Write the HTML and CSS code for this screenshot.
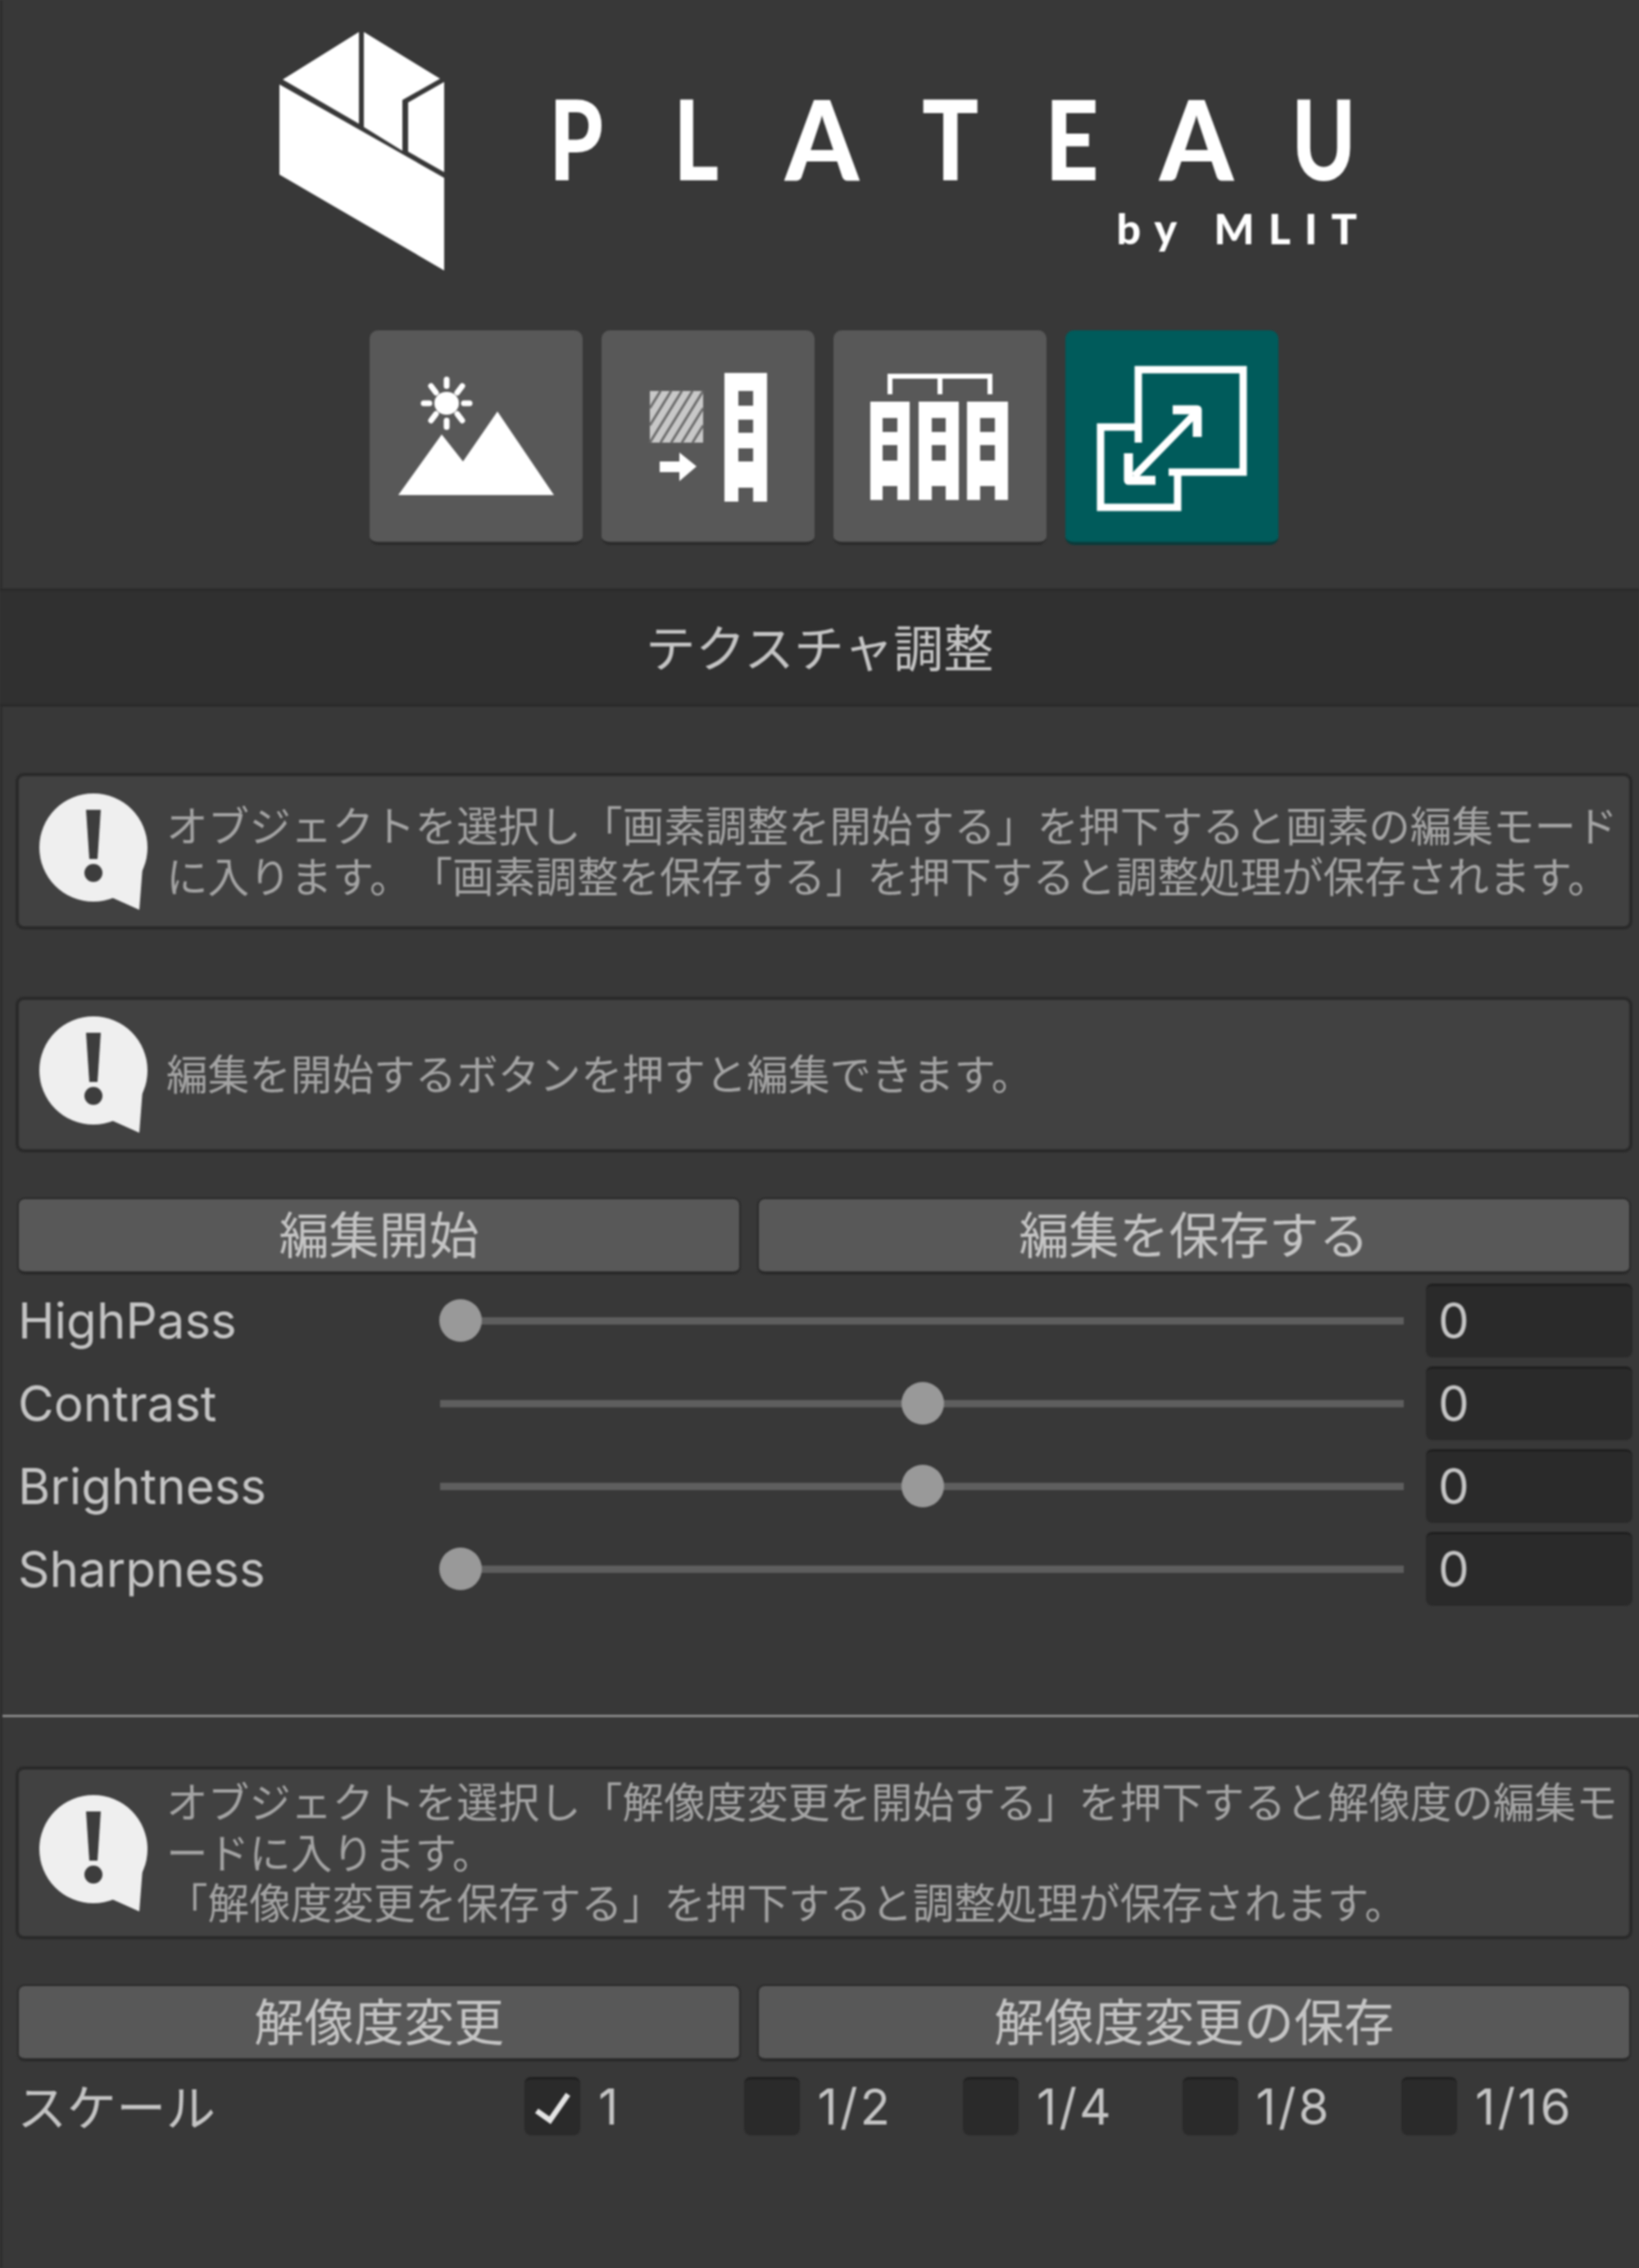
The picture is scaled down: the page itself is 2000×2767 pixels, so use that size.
FILE: index.html
```html
<!DOCTYPE html>
<html lang="ja">
<head>
<meta charset="utf-8">
<title>PLATEAU テクスチャ調整</title>
<link rel="stylesheet" href="styles.css">
</head>
<body>
<svg class="defs" width="0" height="0" aria-hidden="true">
  <symbol id="help" viewBox="0 0 132 142">
    <ellipse cx="66" cy="66" rx="66" ry="66" fill="#efefef"/>
    <polygon points="126,90 122,142 84,125" fill="#efefef"/>
    <polygon points="57,20 75,20 71,80 61,80" fill="#3d3d3d"/>
    <circle cx="66" cy="97" r="11" fill="#3d3d3d"/>
  </symbol>
</svg>
<main class="panel">
  <header class="logo">
    <svg class="logo-mark" viewBox="0 0 204 292" aria-hidden="true">
      <g fill="#fff">
        <polygon points="4,59 97,1 97,113"/>
        <polygon points="103,1 196,58 150,84 150,146 103,117"/>
        <polygon points="157,87 201,62 201,172 157,147"/>
        <polygon points="0,65 201,179 201,292 0,175"/>
      </g>
    </svg>
    <div class="wordmark">
      <div class="wordmark-main"><span>P</span><span>L</span><span class="wide">A</span><span class="mid">T</span><span class="mid">E</span><span class="wide">A</span><span>U</span></div>
      <div class="wordmark-sub">by MLIT</div>
    </div>
  </header>

  <nav class="modes">
    <button class="mode">
      <svg viewBox="0 0 260 260" aria-hidden="true">
        <polygon points="35,201 88,127 114,160 156,99 225,201" fill="#fff"/>
        <ellipse cx="94" cy="89" rx="15" ry="14" fill="#fff"/>
        <g stroke="#fff" stroke-width="7" stroke-linecap="round">
          <line x1="94" y1="60" x2="94" y2="68"/><line x1="94" y1="110" x2="94" y2="118"/>
          <line x1="66" y1="89" x2="73" y2="89"/><line x1="115" y1="89" x2="122" y2="89"/>
          <line x1="75" y1="68" x2="81" y2="76"/><line x1="113" y1="68" x2="107" y2="76"/>
          <line x1="75" y1="110" x2="81" y2="102"/><line x1="113" y1="110" x2="107" y2="102"/>
        </g>
      </svg>
    </button>
    <button class="mode">
      <svg viewBox="0 0 260 260" aria-hidden="true">
        <rect x="59" y="74" width="65" height="63" fill="#c8c8c8"/>
        <g stroke="#6a6a6a" stroke-width="3">
          <line x1="59" y1="95" x2="72" y2="74"/><line x1="59" y1="116" x2="85" y2="74"/>
          <line x1="59" y1="137" x2="98" y2="74"/><line x1="72" y1="137" x2="111" y2="74"/>
          <line x1="85" y1="137" x2="124" y2="74"/><line x1="98" y1="137" x2="124" y2="95"/>
          <line x1="111" y1="137" x2="124" y2="116"/>
        </g>
        <polygon points="71,160 95,160 95,149 116,166 95,184 95,173 71,173" fill="#fff"/>
        <path d="M150 52h52v157h-17v-17h-18v17h-17zM167 74v18h18v-18zM167 109v16h18v-16zM167 144v16h18v-16z" fill="#fff" fill-rule="evenodd"/>
      </svg>
    </button>
    <button class="mode">
      <svg viewBox="0 0 260 260" aria-hidden="true">
        <path d="M69 78V56H191V78M130 56V78" fill="none" stroke="#fff" stroke-width="6"/>
        <path d="M45 87h48v120h-15v-17h-18v17h-15zM60 107v17h18v-17zM60 140v19h18v-19z" fill="#fff" fill-rule="evenodd"/>
        <path d="M104 87h49v120h-16v-17h-17v17h-16zM120 107v17h17v-17zM120 140v19h17v-19z" fill="#fff" fill-rule="evenodd"/>
        <path d="M163 87h50v120h-16v-17h-18v17h-16zM179 107v17h18v-17zM179 140v19h18v-19z" fill="#fff" fill-rule="evenodd"/>
      </svg>
    </button>
    <button class="mode mode-active">
      <svg viewBox="0 0 260 260" aria-hidden="true">
        <g fill="none" stroke="#fff" stroke-width="9">
          <path d="M89 137V48H217V173H126"/>
          <path d="M89 118H43V216H137V173"/>
          <path d="M84 178L158 102"/>
        </g>
        <g fill="none" stroke="#fff" stroke-width="11" stroke-linejoin="round">
          <path d="M131 97H161V130"/>
          <path d="M77 150V183H110"/>
        </g>
      </svg>
    </button>
  </nav>

  <h1 class="title">テクスチャ調整</h1>

  <section class="help help-first">
    <svg class="help-icon" aria-hidden="true"><use href="#help"/></svg>
    <p>オブジェクトを選択し「画素調整を開始する」を押下すると画素の編集モード<br>に入ります。「画素調整を保存する」を押下すると調整処理が保存されます。</p>
  </section>

  <section class="help help-second">
    <svg class="help-icon" aria-hidden="true"><use href="#help"/></svg>
    <p>編集を開始するボタンを押すと編集できます。</p>
  </section>

  <div class="actions actions-edit">
    <button class="action action-left">編集開始</button>
    <button class="action action-right">編集を保存する</button>
  </div>

  <div class="sliders">
    <div class="slider-row">
      <label>HighPass</label>
      <div class="track"><span class="thumb thumb-min"></span></div>
      <div class="value">0</div>
    </div>
    <div class="slider-row">
      <label>Contrast</label>
      <div class="track"><span class="thumb thumb-mid"></span></div>
      <div class="value">0</div>
    </div>
    <div class="slider-row">
      <label>Brightness</label>
      <div class="track"><span class="thumb thumb-mid"></span></div>
      <div class="value">0</div>
    </div>
    <div class="slider-row">
      <label>Sharpness</label>
      <div class="track"><span class="thumb thumb-min"></span></div>
      <div class="value">0</div>
    </div>
  </div>

  <hr class="divider">

  <section class="help help-third">
    <svg class="help-icon" aria-hidden="true"><use href="#help"/></svg>
    <p>オブジェクトを選択し「解像度変更を開始する」を押下すると解像度の編集モ<br>ードに入ります。<br>「解像度変更を保存する」を押下すると調整処理が保存されます。</p>
  </section>

  <div class="actions actions-resize">
    <button class="action action-left">解像度変更</button>
    <button class="action action-right">解像度変更の保存</button>
  </div>

  <div class="scale">
    <span class="scale-label">スケール</span>
    <div class="scale-options">
      <div class="option">
        <span class="box"><svg viewBox="0 0 68 71" aria-hidden="true"><polyline points="14,40 31,52 54,19" fill="none" stroke="#e4e4e4" stroke-width="7"/></svg></span>
        <span>1</span>
      </div>
      <div class="option"><span class="box"></span><span>1/2</span></div>
      <div class="option"><span class="box"></span><span>1/4</span></div>
      <div class="option"><span class="box"></span><span>1/8</span></div>
      <div class="option"><span class="box"></span><span>1/16</span></div>
    </div>
  </div>
</main>
</body>
</html>
```
FILE: styles.css
```css
* { box-sizing: border-box; }
html, body { margin: 0; padding: 0; background: #383838; }
body {
  width: 2000px;
  height: 2767px;
  overflow: hidden;
  font-family: "Inter", "Noto Sans CJK JP", sans-serif;
  color: #c4c4c4;
}
.defs { position: absolute; }
.panel {
  display: flex;
  flex-direction: column;
  height: 2767px;
  border-left: 3px solid #2e2e2e;
  filter: blur(.8px);
}

/* logo */
.logo { display: flex; height: 403px; padding: 38px 0 0 338px; }
.logo-mark { width: 204px; height: 292px; flex: none; }
.wordmark { margin-left: 125px; padding-top: 82px; width: 986px; }
.wordmark-main {
  display: grid;
  grid-template-columns: 152px 136px 167px 150px 140px 161px 80px;
  font-family: "Lato", sans-serif;
  font-weight: 900;
  font-size: 135px;
  line-height: 97px;
  color: #fff;
}
.wordmark-main span { display: block; transform: scaleX(.78); transform-origin: left center; }
.wordmark-main .wide { transform: scaleX(.95); }
.wordmark-main .mid { transform: scaleX(.85); }
.wordmark-sub {
  margin: 40px -17px 0 0;
  text-align: right;
  font-family: "Lato", sans-serif;
  font-weight: 900;
  font-size: 52px;
  line-height: 42px;
  letter-spacing: 17px;
  color: #fff;
}

/* mode tabs */
.modes { display: flex; justify-content: center; gap: 23px; margin-left: 8px; }
.mode {
  width: 260px;
  height: 262px;
  padding: 0;
  background: #585858;
  border: 0;
  border-bottom: 4px solid #2c2c2c;
  border-radius: 10px;
}
.mode svg { display: block; width: 260px; height: 260px; }
.mode-active { background: #005b5b; border-bottom-color: #0b3b3b; }

/* title band */
.title {
  margin: 53px 0 0 -3px;
  height: 144px;
  padding-bottom: 6px;
  display: flex;
  align-items: center;
  justify-content: center;
  background: #303030;
  border-top: 3px solid #2a2a2a;
  border-bottom: 3px solid #2a2a2a;
  font-size: 61px;
  font-weight: 400;
  color: #c4c4c4;
}

/* help boxes */
.help {
  display: flex;
  align-items: center;
  margin: 0 8px 0 16px;
  padding-left: 25px;
  background: #414141;
  border: 4px solid #2a2a2a;
  border-radius: 10px;
}
.help-first { margin-top: 81px; height: 191px; }
.help-second { margin-top: 82px; height: 190px; }
.help-third { margin-top: 60px; height: 211px; }
.help-icon { flex: none; width: 132px; height: 142px; }
.help p {
  margin: 2px 0 0 23px;
  font-size: 50.6px;
  line-height: 61.5px;
  white-space: nowrap;
  text-spacing-trim: space-all;
  color: #a4a4a4;
}

/* action buttons */
.actions { display: flex; gap: 20px; margin: 0 10px 0 18px; }
.actions-edit { margin-top: 55px; }
.actions-resize { margin-top: 55px; }
.action {
  height: 94px;
  padding: 2px 0 0;
  background: #585858;
  border: 2px solid #2a2a2a;
  border-bottom-width: 4px;
  border-radius: 9px;
  font: inherit;
  font-size: 61px;
  line-height: 1;
  color: #c4c4c4;
}
.action-left { width: 883px; }
.action-right { flex: 1; }

/* sliders */
.sliders { display: flex; flex-direction: column; gap: 11px; margin: 11px 5px 0 19px; }
.slider-row { display: flex; align-items: center; height: 90px; }
.slider-row label { flex: none; width: 515px; font-size: 60px; }
.track {
  position: relative;
  flex: none;
  width: 1176px;
  height: 9px;
  background: #5e5e5e;
}
.thumb {
  position: absolute;
  top: -22px;
  width: 52px;
  height: 52px;
  border-radius: 50%;
  background: #999;
}
.thumb-min { left: -1px; }
.thumb-mid { left: 563px; }
.value {
  flex: none;
  width: 252px;
  height: 90px;
  margin-left: 27px;
  padding-left: 15px;
  background: #2a2a2a;
  border-top: 3px solid #1f1f1f;
  border-radius: 8px;
  font-size: 60px;
  line-height: 84px;
}

.divider {
  height: 3px;
  margin: 133px 0 0;
  border: 0;
  background: #888;
}

/* scale */
.scale { display: flex; align-items: center; margin: 19px 0 0 18px; height: 71px; }
.scale-label { flex: none; width: 619px; padding-bottom: 4px; font-size: 60.5px; }
.scale-options { display: flex; }
.option {
  display: flex;
  align-items: center;
  gap: 22px;
  width: 267.5px;
  flex: none;
  font-size: 60px;
  letter-spacing: 3px;
}
.box {
  flex: none;
  display: block;
  width: 68px;
  height: 71px;
  background: #2a2a2a;
  border-top: 3px solid #1f1f1f;
  border-radius: 8px;
}
.box svg { display: block; width: 68px; height: 68px; }
```
